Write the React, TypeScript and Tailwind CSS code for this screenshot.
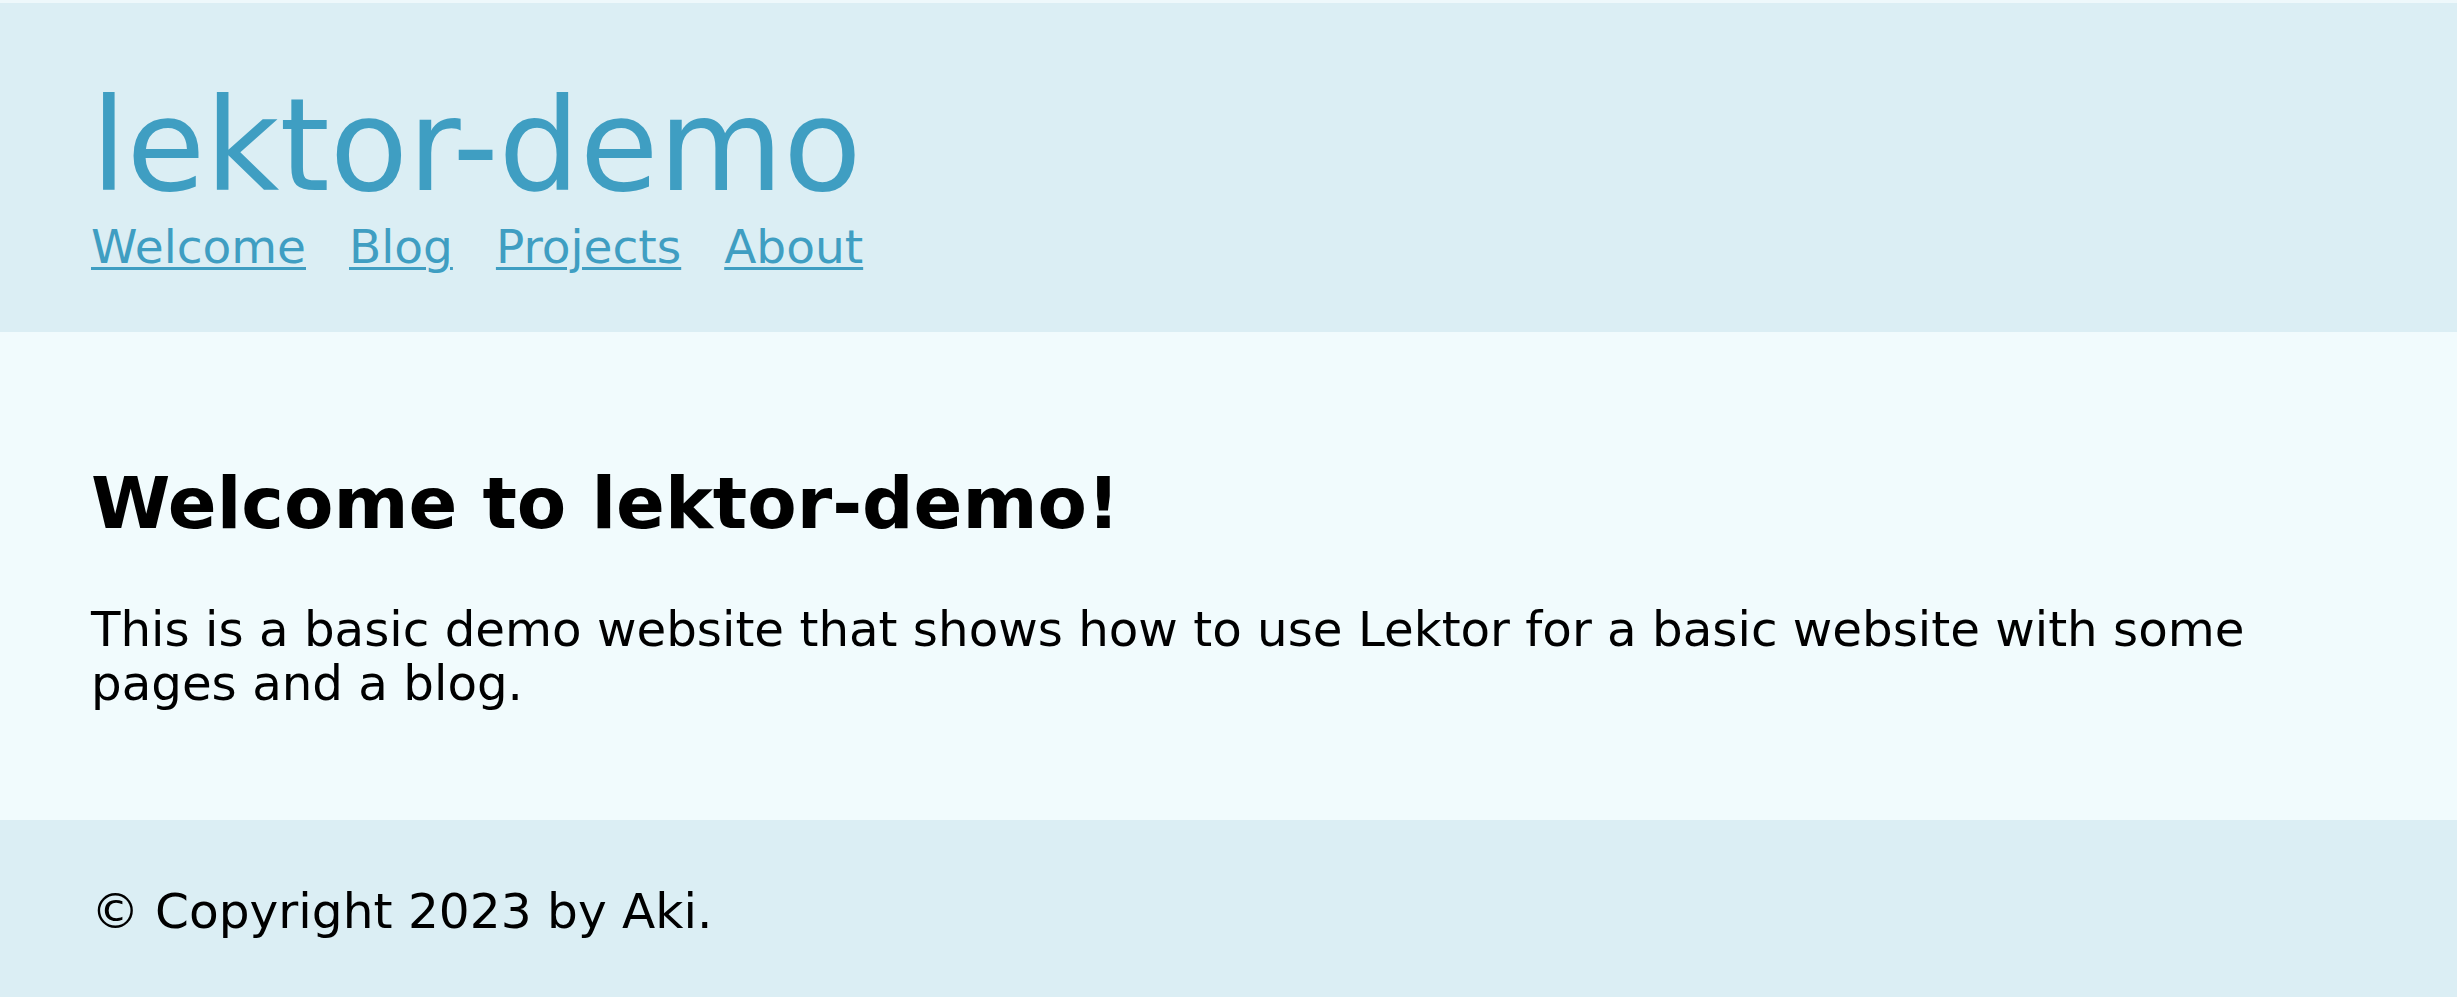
export default function App() {
  const links = ["Welcome", "Blog", "Projects", "About"];

  return (
    <div className="min-h-[999px] bg-white font-['DejaVu_Sans',sans-serif] text-black">
      <div className="border-t-[3px] border-[#eef8fb]">
        <header className="bg-[#dbeef4] pt-[79px] pb-[57px] px-[91px]">
          <h1 className="text-[128px] leading-[128px] text-[#3f9ec2] font-normal">lektor-demo</h1>
          <nav className="mt-[9px] flex gap-[43px] text-[47px] leading-[56px]">
            {links.map((l) => (
              <a key={l} href="#" className="text-[#3f9ec2] underline decoration-[3px] underline-offset-[4px]">
                {l}
              </a>
            ))}
          </nav>
        </header>

        <main className="bg-[#f1fbfd] pt-[129px] pb-[110px] px-[91px]">
          <h2 className="text-[72px] leading-[84px] font-bold">Welcome to lektor-demo!</h2>
          <p className="mt-[57px] text-[48.3px] leading-[54px] max-w-[2200px]">
            This is a basic demo website that shows how to use Lektor for a basic website with some pages and a blog.
          </p>
        </main>

        <footer className="bg-[#dbeef4] pt-[64px] pb-[59px] px-[91px] text-[48.6px] leading-[54px]">
          © Copyright 2023 by Aki.
        </footer>
      </div>
    </div>
  );
}
